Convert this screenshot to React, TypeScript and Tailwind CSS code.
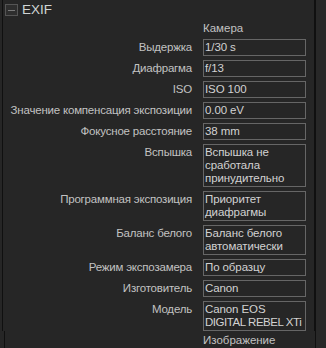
// EXIF properties panel — collapsible group header, right-aligned labels,
// boxed values (multi-line where the value wraps), scroll strip on the right.

const ROWS: { label: string; value: string[] }[] = [
  { label: 'Выдержка', value: ['1/30 s'] },
  { label: 'Диафрагма', value: ['f/13'] },
  { label: 'ISO', value: ['ISO 100'] },
  { label: 'Значение компенсация экспозиции', value: ['0.00 eV'] },
  { label: 'Фокусное расстояние', value: ['38 mm'] },
  { label: 'Вспышка', value: ['Вспышка не', 'сработала', 'принудительно'] },
  { label: 'Программная экспозиция', value: ['Приоритет', 'диафрагмы'] },
  { label: 'Баланс белого', value: ['Баланс белого', 'автоматически'] },
  { label: 'Режим экспозамера', value: ['По образцу'] },
  { label: 'Изготовитель', value: ['Canon'] },
  { label: 'Модель', value: ['Canon EOS', 'DIGITAL REBEL XTi'] },
]

function Row({ label, value }: { label: string; value: string[] }) {
  return (
    <>
      <div className="whitespace-nowrap pt-[2px] text-right leading-[13px] tracking-[-0.2px] text-[#c2c2c2]">{label}</div>
      <div className="border border-[#666] py-[1px] pl-[1px] leading-[13px] text-[#d2d2d2]">
        {value.map((line) => (
          // the model name is a tight fit in the box
          <div key={line} className={line.length > 14 ? 'whitespace-nowrap tracking-[-0.45px]' : 'whitespace-nowrap tracking-[-0.1px]'}>
            {line}
          </div>
        ))}
      </div>
    </>
  )
}

export default function App() {
  return (
    <div
      className="flex h-[348px] w-[326px] overflow-hidden bg-[#262626] text-[11.5px] antialiased"
      style={{ fontFamily: '"Liberation Sans", Arial, sans-serif' }}
    >
      <div className="flex w-[315px] flex-col">
        <div className="ml-[2px] flex h-[331px] flex-col border-x border-[#101010]">
          {/* group header */}
          <div className="flex h-[20px] items-center gap-[4px] pl-[2px]">
            <div className="flex h-[12px] w-[13px] items-center justify-center border border-[#555] bg-[#2e2e2e]">
              <div className="h-[1px] w-[7px] bg-[#7a7a7a]" />
            </div>
            <span className="text-[13.5px] text-[#cfd4d4]">EXIF</span>
          </div>

          <div className="grid grid-cols-[189px_103px] gap-x-[11px] gap-y-[4px] pt-[2px]">
            <div />
            <div className="leading-[13px] text-[#c2c2c2]">Камера</div>
            {ROWS.map((r) => (
              <Row key={r.label} {...r} />
            ))}
          </div>
        </div>

        <div className="ml-[4px] flex-1 border-l border-[#101010] pl-[198px] pt-[3px] leading-[13px] text-[#c2c2c2]">
          Изображение
        </div>
      </div>

      {/* scroll strip */}
      <div className="flex-1 border-l border-[#101010] bg-[#282828]" />
    </div>
  )
}
